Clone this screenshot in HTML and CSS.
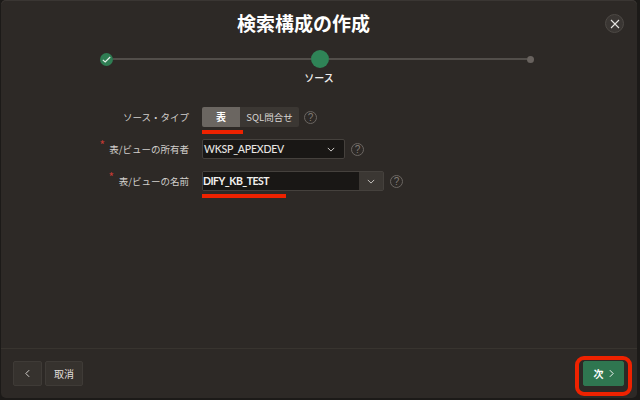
FILE: index.html
```html
<!DOCTYPE html>
<html lang="ja">
<head>
<meta charset="utf-8">
<title>検索構成の作成</title>
<link rel="stylesheet" href="styles.css">
</head>
<body>
<div class="dialog">
  <header class="head">
    <h1 class="title">検索構成の作成</h1>
    <button class="close" aria-label="閉じる">
      <svg width="10" height="10" viewBox="0 0 10 10"><path d="M1 1l8 8M9 1l-8 8" class="ico"/></svg>
    </button>
  </header>
  <div class="wizard">
    <div class="steps">
      <span class="step done">
        <svg width="9" height="7" viewBox="0 0 9 7"><path d="M.8 3.8l2.4 2.2L8.2 1" class="ico"/></svg>
      </span>
      <span class="line"></span>
      <span class="step current"></span>
      <span class="line"></span>
      <span class="step todo"></span>
    </div>
    <div class="step-label">ソース</div>
  </div>
  <main class="form">
    <div class="row row-type">
      <label class="lbl">ソース・タイプ</label>
      <div class="seg">
        <span class="seg-on">表</span><span class="seg-off">SQL問合せ</span>
      </div>
      <span class="help">?</span>
    </div>
    <div class="row row-owner">
      <label class="lbl req">表/ビューの所有者</label>
      <div class="select">
        <span>WKSP_APEXDEV</span>
        <svg width="8" height="5" viewBox="0 0 10 6"><path d="M1 1l4 4 4-4" class="ico"/></svg>
      </div>
      <span class="help">?</span>
    </div>
    <div class="row row-name">
      <label class="lbl req">表/ビューの名前</label>
      <div class="combo">
        <span class="combo-input">DIFY_KB_TEST</span>
        <span class="combo-btn"><svg width="8" height="5" viewBox="0 0 10 6"><path d="M1 1l4 4 4-4" class="ico"/></svg></span>
      </div>
      <span class="help">?</span>
    </div>
    <span class="mark mark-type"></span>
    <span class="mark mark-name"></span>
  </main>
  <footer class="foot">
    <div class="foot-left">
      <button class="btn btn-icon"><svg width="5" height="9" viewBox="0 0 6 10"><path d="M5 1L1 5l4 4" class="ico"/></svg></button>
      <button class="btn">取消</button>
    </div>
    <div class="next-wrap">
      <button class="btn btn-next"><span>次</span><svg width="5" height="9" viewBox="0 0 6 10"><path d="M1 1l4 4-4 4" class="ico"/></svg></button>
    </div>
  </footer>
</div>
</body>
</html>
```
FILE: styles.css
```css
* { box-sizing: border-box; }
html, body { margin: 0; height: 100%; }
body {
  width: 640px;
  height: 400px;
  overflow: hidden;
  background: #1c1a18;
  padding: 0 3px 2px 1px;
  font-family: "Noto Sans CJK JP", "Liberation Sans", sans-serif;
  color: #e6e4e1;
}
.dialog {
  position: relative;
  height: 398px;
  display: flex;
  flex-direction: column;
  background: #2d2926;
  border-radius: 5px;
  box-shadow: inset 0 1px 0 #3a3633;
}
.ico { fill: none; stroke: currentColor; stroke-width: 1.1; }
.head {
  height: 50px;
  flex: none;
  display: flex;
  align-items: flex-start;
  justify-content: center;
  position: relative;
  padding-right: 31px;
}
.title {
  margin: 10px 0 0;
  font-size: 19px;
  line-height: 26px;
  font-weight: 700;
  color: #fff;
}
.close {
  position: absolute;
  top: 14px;
  right: 13px;
  width: 19px;
  height: 19px;
  padding: 0;
  display: flex;
  align-items: center;
  justify-content: center;
  border-radius: 50%;
  border: 1px solid #4d4945;
  background: #3a3633;
  color: #e6e4e1;
}
.wizard { flex: none; height: 42px; }
.steps {
  display: flex;
  align-items: center;
  margin-left: 99px;
  height: 18px;
  width: 434px;
}
.line { flex: 1; height: 2px; background: #524e4a; }
.step { flex: none; border-radius: 50%; display: flex; align-items: center; justify-content: center; }
.done { width: 13px; height: 13px; background: #2f7d53; color: #e8f2ec; }
.current { width: 18px; height: 18px; background: #2f8457; }
.todo { width: 7px; height: 7px; background: #68625e; }
.step-label {
  margin-top: 2px;
  text-align: center;
  font-size: 10px;
  line-height: 16px;
  font-weight: 500;
  color: #f0eeec;
}
.form { flex: 1; position: relative; padding-top: 15px; }
.row { display: flex; align-items: center; height: 20px; }
.lbl {
  position: relative;
  width: 188px;
  flex: none;
  text-align: right;
  font-size: 9.5px;
  line-height: 14px;
  color: #d2cfcc;
}
.req::before {
  content: "*";
  position: absolute;
  right: 84px;
  top: -4px;
  color: #c23a34;
  font-size: 12px;
}
.row-name .req::before { right: 75px; }
.row-owner { margin-top: 12px; }
.row-name { margin-top: 12px; }
.seg {
  margin-left: 13px;
  display: flex;
  height: 20px;
  font-size: 9.5px;
  line-height: 20px;
  text-align: center;
}
.seg-on { width: 38px; background: #6b6661; color: #fff; font-weight: 700; font-size: 10px; border-radius: 2px 0 0 2px; }
.seg-off { width: 59px; background: #3b3733; color: #d8d5d2; border-radius: 0 2px 2px 0; }
.help {
  flex: none;
  margin-left: 6px;
  width: 13px;
  height: 13px;
  border: 1px solid #6b6662;
  border-radius: 50%;
  color: #827c77;
  font: 10px/11px "Liberation Sans", sans-serif;
  text-align: center;
}
.row-type .help { margin-left: 5px; }
.select {
  margin-left: 13px;
  width: 143px;
  height: 20px;
  display: flex;
  align-items: center;
  justify-content: space-between;
  padding: 0 9px 0 1px;
  background: #191715;
  border: 1px solid #45413d;
  border-radius: 2px;
  font: 500 10.5px/18px "Lato", sans-serif;
  letter-spacing: -0.2px;
  color: #e8e6e3;
}
.combo { margin-left: 13px; display: flex; height: 20px; border: 1px solid #45413d; border-radius: 2px; }
.combo-input {
  width: 156px;
  background: #191715;
  font: 700 10.5px/18px "Lato", sans-serif;
  letter-spacing: -0.5px;
  color: #f2f0ee;
}
.combo-btn {
  width: 24px;
  display: flex;
  align-items: center;
  justify-content: center;
  background: #3b3733;
  color: #d8d5d2;
}
.mark { position: absolute; height: 4px; background: #ee2200; left: 201px; }
.mark-type { top: 38px; width: 41px; }
.mark-name { top: 102px; width: 84px; }
.foot {
  flex: none;
  height: 50px;
  border-top: 1px solid #38342f;
  display: flex;
  justify-content: space-between;
  align-items: center;
  padding: 0 13px 0 12px;
}
.foot-left { display: flex; gap: 3px; }
.btn {
  height: 25px;
  min-width: 38px;
  padding: 0;
  display: flex;
  align-items: center;
  justify-content: center;
  border: 1px solid #3f3b37;
  border-radius: 2px;
  background: #36322e;
  color: #e0ddda;
  font: 10px/1 "Noto Sans CJK JP", sans-serif;
}
.btn-icon { width: 29px; min-width: 29px; }
.next-wrap { position: relative; }
.next-wrap::after {
  content: "";
  position: absolute;
  inset: -5px -8px -10px -8px;
  border: 4px solid #ee2200;
  border-radius: 9px;
}
.btn-next {
  width: 41px;
  min-width: 41px;
  gap: 5px;
  background: #2f7650;
  border-color: #2f7650;
  color: #fff;
  font-weight: 700;
}
```
